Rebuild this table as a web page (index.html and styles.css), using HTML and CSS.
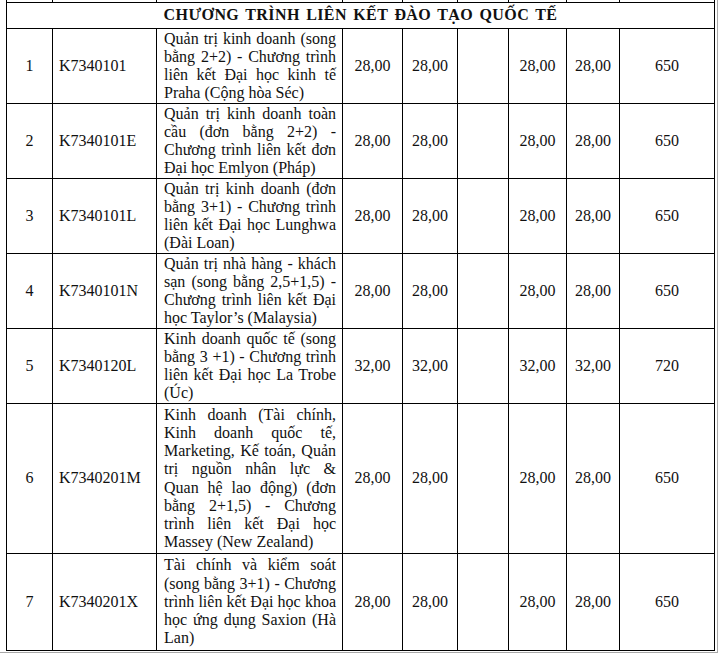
FILE: index.html
```html
<!DOCTYPE html>
<html lang="vi">
<head>
<meta charset="utf-8">
<title>Chương trình liên kết đào tạo quốc tế</title>
<link rel="stylesheet" href="styles.css">
</head>
<body>
<div class="frame">
<table class="grid">
<colgroup>
<col class="c-no"><col class="c-code"><col class="c-name"><col class="c-s1"><col class="c-s2"><col class="c-s3"><col class="c-s4"><col class="c-s5"><col class="c-pt">
</colgroup>
<tbody>
<tr class="cut"><td></td><td></td><td></td><td></td><td></td><td></td><td></td><td></td><td></td></tr>
<tr class="section"><td colspan="9">CHƯƠNG TRÌNH LIÊN KẾT ĐÀO TẠO QUỐC TẾ</td></tr>
<tr class="r4">
<td class="num">1</td><td class="code">K7340101</td>
<td class="name">Quản trị kinh doanh (song bằng 2+2) - Chương trình liên kết Đại học kinh tế Praha (Cộng hòa Séc)</td>
<td class="val">28,00</td><td class="val">28,00</td><td class="val"></td><td class="val">28,00</td><td class="val">28,00</td><td class="val">650</td>
</tr>
<tr class="r4">
<td class="num">2</td><td class="code">K7340101E</td>
<td class="name">Quản trị kinh doanh toàn cầu (đơn bằng 2+2) - Chương trình liên kết đơn Đại học Emlyon (Pháp)</td>
<td class="val">28,00</td><td class="val">28,00</td><td class="val"></td><td class="val">28,00</td><td class="val">28,00</td><td class="val">650</td>
</tr>
<tr class="r4">
<td class="num">3</td><td class="code">K7340101L</td>
<td class="name">Quản trị kinh doanh (đơn bằng 3+1) - Chương trình liên kết Đại học Lunghwa (Đài Loan)</td>
<td class="val">28,00</td><td class="val">28,00</td><td class="val"></td><td class="val">28,00</td><td class="val">28,00</td><td class="val">650</td>
</tr>
<tr class="r4">
<td class="num">4</td><td class="code">K7340101N</td>
<td class="name">Quản trị nhà hàng - khách sạn (song bằng 2,5+1,5) - Chương trình liên kết Đại học Taylor’s (Malaysia)</td>
<td class="val">28,00</td><td class="val">28,00</td><td class="val"></td><td class="val">28,00</td><td class="val">28,00</td><td class="val">650</td>
</tr>
<tr class="r4">
<td class="num">5</td><td class="code">K7340120L</td>
<td class="name">Kinh doanh quốc tế (song bằng 3 +1) - Chương trình liên kết Đại học La Trobe (Úc)</td>
<td class="val">32,00</td><td class="val">32,00</td><td class="val"></td><td class="val">32,00</td><td class="val">32,00</td><td class="val">720</td>
</tr>
<tr class="r8">
<td class="num">6</td><td class="code">K7340201M</td>
<td class="name">Kinh doanh (Tài chính, Kinh doanh quốc tế, Marketing, Kế toán, Quản trị nguồn nhân lực &amp; Quan hệ lao động) (đơn bằng 2+1,5) - Chương trình liên kết Đại học Massey (New Zealand)</td>
<td class="val">28,00</td><td class="val">28,00</td><td class="val"></td><td class="val">28,00</td><td class="val">28,00</td><td class="val">650</td>
</tr>
<tr class="r5">
<td class="num">7</td><td class="code">K7340201X</td>
<td class="name">Tài chính và kiểm soát (song bằng 3+1) - Chương trình liên kết Đại học khoa học ứng dụng Saxion (Hà Lan)</td>
<td class="val">28,00</td><td class="val">28,00</td><td class="val"></td><td class="val">28,00</td><td class="val">28,00</td><td class="val">650</td>
</tr>
</tbody>
</table>
</div>
</body>
</html>
```
FILE: styles.css
```css
html, body {
  margin: 0;
  padding: 0;
  background: #ffffff;
}
.frame {
  width: 718px;
  height: 653px;
  box-sizing: border-box;
  padding-left: 6px;
  border-right: 1px solid #a8a8a8;
  border-bottom: 1px solid #a8a8a8;
  overflow: hidden;
  background: #ffffff;
}
.grid {
  border-collapse: collapse;
  table-layout: fixed;
  width: 708px;
  font-family: "Liberation Serif", "Times New Roman", serif;
  font-size: 16px;
  line-height: 18.25px;
  color: #111111;
}
.c-no { width: 46px; }
.c-code { width: 104px; }
.c-name { width: 186px; }
.c-s1 { width: 60px; }
.c-s2 { width: 55px; }
.c-s3 { width: 51px; }
.c-s4 { width: 58px; }
.c-s5 { width: 53px; }
.c-pt { width: 95px; }
.grid td {
  border: 1px solid #000000;
  padding: 0.5px 6px;
  vertical-align: middle;
}
.grid .cut td {
  border-top: none;
  height: 2px;
  padding: 0;
  line-height: 0;
}
.grid .section td {
  height: 25px;
  padding: 0;
  text-align: center;
  font-weight: bold;
  font-size: 16px;
  letter-spacing: 0.4px;
  word-spacing: 2px;
}
.num, .val { text-align: center; }
.grid td.num, .grid td.val { padding-left: 0; padding-right: 0; }
.grid td.name {
  text-align: justify;
  padding-left: 7px;
  padding-right: 6px;
}
.grid td.code { padding-left: 6px; }
.r8 td { height: 148px; }
.r5 td { height: 95px; }
```
